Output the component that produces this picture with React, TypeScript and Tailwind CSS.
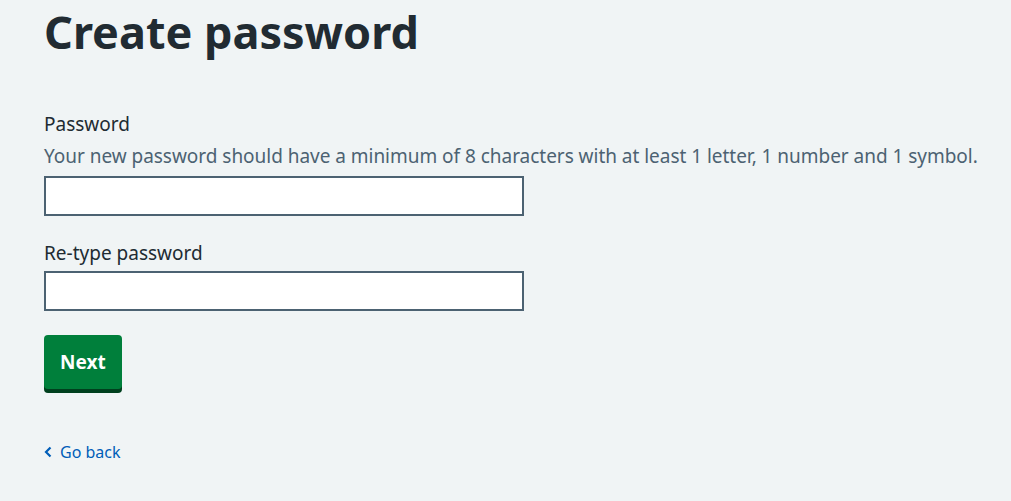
export default function App() {
  const font = { fontFamily: '"Noto Sans", "Open Sans", Arial, sans-serif' };
  return (
    <div className="min-h-[501px] bg-[#f0f4f5] text-[#212b32] pl-[44px] pr-[20px]" style={font}>
      <h1 className="text-[45px] font-bold leading-[56px] pt-[4px] m-0">Create password</h1>

      <div className="mt-[50px]">
        <label className="block text-[19px] leading-[28px]">Password</label>
        <div className="text-[19px] leading-[28px] text-[#4c6272] mt-[4px] whitespace-nowrap tracking-[-0.03px]">
          Your new password should have a minimum of 8 characters with at least 1 letter, 1 number and 1 symbol.
        </div>
        <input
          type="password"
          className="block mt-[6px] w-[480px] h-[40px] border-2 border-[#4c6272] bg-white"
        />
      </div>

      <div className="mt-[23px]">
        <label className="block text-[19px] leading-[28px]">Re-type password</label>
        <input
          type="password"
          className="block mt-[4px] w-[480px] h-[40px] border-2 border-[#4c6272] bg-white"
        />
      </div>

      <button className="block mt-[24px] h-[54px] px-[16px] bg-[#007f3b] text-white text-[19px] font-bold rounded-[4px] shadow-[0_4px_0_#00401e]">
        Next
      </button>

      <div className="mt-[51px]">
        <a href="#" className="inline-flex items-center gap-[8px] text-[16px] leading-[22px] text-[#005eb8]">
          <svg width="8" height="12" viewBox="0 0 8 12" fill="none">
            <path d="M6.5 1.5L2 6L6.5 10.5" stroke="currentColor" strokeWidth="2.2" />
          </svg>
          Go back
        </a>
      </div>
    </div>
  );
}
